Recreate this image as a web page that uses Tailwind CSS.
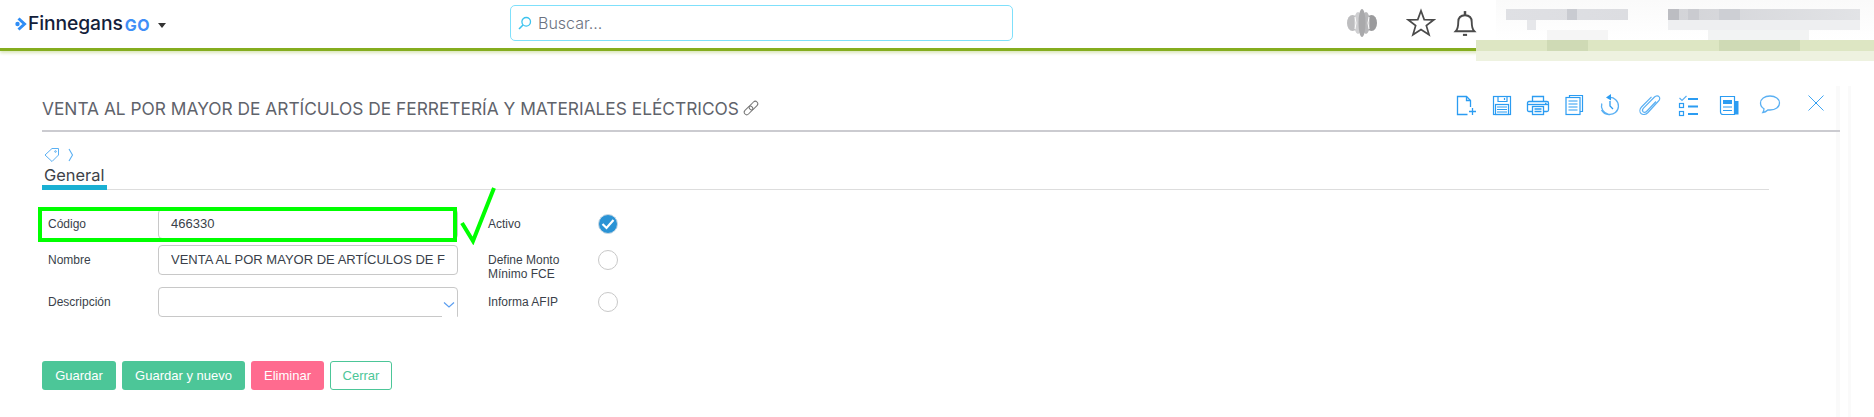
<!DOCTYPE html>
<html><head><meta charset="utf-8"><script src="https://cdn.jsdelivr.net/npm/@tailwindcss/browser@4"></script></head>
<body class="bg-white">
<div class="relative w-[1874px] h-[417px] overflow-hidden bg-white font-['Liberation_Sans',sans-serif]">
  <!-- faint scrollbar edges -->
  <div class="absolute left-[1836px] top-[86px] w-[4px] h-[331px] bg-[#fafafa]"></div>
  <div class="absolute left-[1848px] top-[86px] w-[3px] h-[331px] bg-[#fafafa]"></div>

  <!-- header -->
  <header class="relative h-[51px] border-b-[3px] border-[#85ad1f] shadow-[0_2px_3px_rgba(133,173,31,0.3)] flex items-start">
    <div class="w-[510px] h-[48px] flex items-center pl-[15px] shrink-0">
      <svg width="12" height="14" viewBox="0 0 12 14" class="mr-[1px]" fill="none"><path d="M3.500 1.500 L9.500 7 L3.500 12.500" stroke="#2f8df5" stroke-width="3"/><circle cx="2.500" cy="7" r="2.200" fill="#2f8df5"/></svg>
      <span class="font-['Inter',sans-serif] font-medium text-[19.300px] tracking-[-0.1px] text-[#13203a] leading-none">Finnegans</span>
      <span class="font-['Inter',sans-serif] font-bold text-[16px] tracking-[0.6px] text-[#3f8ff7] leading-none ml-[2px] mt-[2px]">GO</span>
      <span class="ml-[8px] mt-[2px] w-0 h-0 border-x-[4px] border-x-transparent border-t-[5px] border-t-[#333]"></span>
    </div>
    <div class="mt-[5px] w-[503px] h-[36px] border border-[#7fe0fb] rounded-[5px] flex items-center pl-[7px] shrink-0">
      <svg width="14" height="14" viewBox="0 0 14 14" fill="none" stroke="#3cc3ee" stroke-width="1.300"><circle cx="8.200" cy="5.800" r="4.300"/><path d="M5 9 L1 13" stroke-width="1.600"/></svg>
      <span class="ml-[6px] font-['Inter',sans-serif] font-light text-[16px] text-[#6b7280]">Buscar...</span>
    </div>
    <!-- ring logo, star, bell -->
    <div class="ml-[333px] h-[46px] flex items-center">
      <svg width="32" height="28" viewBox="0 0 32 28"><ellipse cx="6.500" cy="14" rx="5.500" ry="8" fill="#bdbdbf"/><ellipse cx="25.500" cy="14" rx="5.500" ry="8" fill="#9b9b9d"/><ellipse cx="12" cy="14" rx="4" ry="11" fill="#cfcfd1"/><ellipse cx="20" cy="14" rx="4" ry="11" fill="#b8b8ba"/><ellipse cx="16" cy="14" rx="3.500" ry="14" fill="#a9a9ab"/><path d="M9 8 Q11 14 9 20 M23 8 Q21 14 23 20" stroke="#fff" stroke-width="1" fill="none"/></svg>
      <svg class="ml-[28px]" width="30" height="30" viewBox="0 0 28 28" fill="none" stroke="#4a4a4a" stroke-width="1.600" stroke-linejoin="miter"><path d="M14 2.500 L17 10.800 L26 11 L19 16.500 L21.500 25 L14 20 L6.500 25 L9 16.500 L2 11 L11 10.800Z"/></svg>
      <svg class="ml-[15px]" width="28" height="29" viewBox="0 0 24 28" fill="none" stroke="#4a4a4a" stroke-width="1.800"><path d="M3 21.500 H21 C19 19.500 18.500 18 18.500 12.500 C18.500 8.500 16 6 12 6 C8 6 5.500 8.500 5.500 12.500 C5.500 18 5 19.500 3 21.500Z"/><path d="M12 2 V6" stroke-width="2.400"/><path d="M10 25 H14" stroke-width="2"/></svg>
    </div>
  </header>

  <!-- main -->
  <main class="relative pl-[42px]">
    <div class="w-[1798px] h-[81px] border-b-2 border-[#cbcbd0] flex items-end pb-[12px] justify-between">
      <div class="flex items-center h-[28px] mb-[-5px]">
        <h1 class="font-['Inter',sans-serif] font-normal text-[17.320px] text-[#5f636b] whitespace-nowrap">VENTA AL POR MAYOR DE ARTÍCULOS DE FERRETERÍA Y MATERIALES ELÉCTRICOS</h1>
        <svg class="ml-[3px] mb-[2px]" width="18" height="18" viewBox="0 0 18 18" fill="none" stroke="#777" stroke-width="1"><g transform="rotate(-45 9 9)"><rect x="0.500" y="6.500" width="10" height="5" rx="2.500"/><rect x="7.500" y="6.500" width="10" height="5" rx="2.500"/></g></svg>
      </div>
      <div class="flex items-center mr-[12px] mb-[1px]">
        <!-- new doc -->
        <svg width="24" height="24" viewBox="0 0 24 24" fill="none" stroke="#2b9cf2" stroke-width="1.300"><path d="M16.500 14 V7.500 L12.500 3.500 H3.500 V21.500 H13.500"/><path d="M12.500 3.500 V7.500 H16.500"/><path d="M15 18.500 H22 M18.500 15 V22"/></svg>
        <!-- save -->
        <svg class="ml-[12px]" width="24" height="24" viewBox="0 0 24 24" fill="none" stroke="#2b9cf2" stroke-width="1.200"><rect x="3.500" y="3.500" width="17" height="18"/><path d="M8 3.500 V8.500 H17 V3.500 M14.500 5 V7"/><rect x="5.500" y="11.500" width="13" height="10"/><path d="M7 14 H17 M7 16.500 H17 M7 19 H17"/></svg>
        <!-- print -->
        <svg class="ml-[12px]" width="24" height="24" viewBox="0 0 24 24" fill="none" stroke="#2b9cf2" stroke-width="1.300"><path d="M6.500 8.500 V3.500 H17.500 V8.500"/><path d="M6 18.500 H3 C2 18.500 1.500 18 1.500 17 V10 C1.500 9 2 8.500 3 8.500 H21 C22 8.500 22.500 9 22.500 10 V17 C22.500 18 22 18.500 21 18.500 H18"/><rect x="6.500" y="13.500" width="11" height="8"/><path d="M8.500 16 H15.500 M8.500 18.500 H15.500"/><path d="M2 11.500 H22" /><path d="M19 10.500 H20.500" /></svg>
        <!-- copy -->
        <svg class="ml-[12px]" width="24" height="24" viewBox="0 0 24 24" fill="none" stroke="#2b9cf2" stroke-width="1.200"><path d="M7.500 4 V2.500 H20.500 V18.500 H18"/><rect x="4" y="4.500" width="14" height="17"/><path d="M6.500 8 H15.500 M6.500 11 H15.500 M6.500 14 H15.500 M6.500 17 H15.500"/></svg>
        <!-- history -->
        <svg class="ml-[12px]" width="24" height="24" viewBox="0 0 24 24" fill="none" stroke="#5ab0f3" stroke-width="1.300"><path d="M11 4.500 A8.500 8.500 0 1 1 3.800 10.500 M3.500 17 A8.500 8.500 0 0 0 12 21.500" /><path d="M13 1 L8 4.500 L13 7.500Z" fill="#2b9cf2" stroke="none"/><path d="M12 8 V13 L15 16" stroke="#2b9cf2"/></svg>
        <!-- paperclip -->
        <svg class="ml-[16px]" width="24" height="24" viewBox="0 0 24 24" fill="none" stroke="#5ab0f3" stroke-width="1.200"><path d="M18 8.500 L8.500 18.500 C7.200 19.700 5.800 19.500 5 18.700 C4.200 17.800 4.300 16.400 5.500 15.200 L16.500 4 C18 2.600 20 2.500 21 3.600 C22.100 4.700 22 6.600 20.500 8 L10 19.500 C8 21.500 5 22.300 3 20.500 C1.300 18.800 1.700 16 3.500 14 L13.500 3.800"/></svg>
        <!-- checklist -->
        <svg class="ml-[16px]" width="24" height="24" viewBox="0 0 24 24" fill="none" stroke="#2b9cf2"><path d="M1.500 5 L4 7.500 L8.500 3" stroke-width="1.200" stroke="#5ab0f3"/><rect x="1.500" y="10.500" width="4" height="4" stroke-width="1.200"/><rect x="1.500" y="18.500" width="4" height="4" stroke-width="1.200"/><path d="M10 6 H20 M10 13.500 H20 M10 21 H20" stroke-width="2"/></svg>
        <!-- news -->
        <svg class="ml-[15px]" width="24" height="24" viewBox="0 0 24 24" fill="none" stroke="#2b9cf2" stroke-width="1.200"><path d="M3.500 3.500 H17.500 V21.500 H6 C4.500 21.500 3.500 20.500 3.500 19Z"/><rect x="6" y="7" width="9" height="4" fill="#2b9cf2" stroke="none"/><path d="M6 14 H15 M6 17.500 H15"/><path d="M18 8 H21.500 V21.500 H18Z" fill="#2b9cf2" stroke="none"/></svg>
        <!-- chat -->
        <svg class="ml-[17px]" width="24" height="24" viewBox="0 0 24 24" fill="none" stroke="#5ab0f3" stroke-width="1.300"><path d="M12 3 C6.500 3 2.500 5.800 2.500 10 C2.500 12.500 3.800 14.500 6 15.800 C6 17 5.500 18.500 4.800 19.500 C7 19.300 8.500 18.300 9.800 17 C10.500 17 11.200 17 12 17 C17.500 17 21.500 14 21.500 10 C21.500 5.800 17.500 3 12 3Z"/></svg>
        <!-- close -->
        <svg class="ml-[22px] mt-[-5px]" width="24" height="24" viewBox="0 0 24 24" fill="none" stroke="#2b9cf2" stroke-width="0.900"><path d="M4.500 4.500 L19.500 19.500 M19.500 4.500 L4.500 19.500"/><circle cx="12" cy="12" r="1.100" fill="#2b9cf2" stroke="none"/></svg>
      </div>
    </div>

    <!-- breadcrumb -->
    <div class="h-[18px] mt-[14px] flex items-center pl-[2px]">
      <svg width="16" height="16" viewBox="0 0 16 16" fill="none" stroke="#5ab0f3" stroke-width="1"><path d="M1 8 L8 1.500 H14.500 V8 L8 14.500 Z"/><circle cx="11.500" cy="4.500" r="0.800"/></svg>
      <svg class="ml-[8px]" width="6" height="14" viewBox="0 0 6 14" fill="none" stroke="#5ab0f3" stroke-width="1.100"><path d="M1 1 L4.500 7 L1 13"/></svg>
    </div>

    <!-- tabs -->
    <div class="w-[1727px] h-[26px] border-b border-[#dddddd]">
      <div class="w-[65px] h-[26px] border-b-[5px] border-[#1ab0d3] pl-[2px] pt-[1px] font-['Inter',sans-serif] text-[16.400px] leading-[20px] text-[#3d4248]">General</div>
    </div>

    <!-- form -->
    <div class="mt-[19px] grid grid-cols-[116px_300px_30px_110px_20px] text-[12px] text-[#3a3f4a]">
      <div class="h-[36px] pl-[6px] pt-[8px] leading-[14px]">Código</div>
      <div class="h-[30px] border border-[#c8c8c8] rounded-[4px] flex items-center pl-[12px] text-[13px]">466330</div>
      <div></div>
      <div class="pt-[8px] leading-[14px]">Activo</div>
      <div class="h-[20px] mt-[5px] w-[20px] rounded-full bg-[#2a93d5] border border-[#c8d8e4] flex items-center justify-center"><svg width="14" height="12" viewBox="0 0 14 12" fill="none" stroke="#fff" stroke-width="2.200"><path d="M1.500 6 L5.500 10 L12.500 2"/></svg></div>

      <div class="h-[42px] pl-[6px] pt-[8px] leading-[14px]">Nombre</div>
      <div class="h-[30px] border border-[#c8c8c8] rounded-[4px] flex items-center pl-[12px] text-[13px]"><div class="w-[274px] overflow-hidden whitespace-nowrap">VENTA AL POR MAYOR DE ARTÍCULOS DE FERRETERÍA Y MATERIALES ELÉCTRICOS</div></div>
      <div></div>
      <div class="pt-[8px] leading-[14px]">Define Monto<br>Mínimo FCE</div>
      <div class="h-[20px] mt-[5px] w-[20px] rounded-full border border-[#c8c8c8]"></div>

      <div class="h-[42px] pl-[6px] pt-[8px] leading-[14px]">Descripción</div>
      <div class="relative h-[30px] border border-[#c8c8c8] rounded-l-[4px] rounded-tr-[4px]">
        <svg class="absolute right-[2px] top-[13px]" width="12" height="8" viewBox="0 0 12 8" fill="none" stroke="#5b9ef0" stroke-width="1.200"><path d="M1 1.500 L6 6 L11 1.500"/></svg>
        <div class="absolute right-[0px] bottom-[-1px] w-[15px] h-[1px] bg-white"></div>
      </div>
      <div></div>
      <div class="pt-[8px] leading-[14px]">Informa AFIP</div>
      <div class="h-[20px] mt-[5px] w-[20px] rounded-full border border-[#c8c8c8]"></div>
    </div>

    <!-- buttons -->
    <div class="mt-[32px] flex gap-[6px] text-[13px] leading-[27px]">
      <button class="h-[29px] w-[74px] rounded-[3px] bg-[#4cc698] text-white text-center">Guardar</button>
      <button class="h-[29px] w-[123px] rounded-[3px] bg-[#4cc698] text-white text-center">Guardar y nuevo</button>
      <button class="h-[29px] w-[73px] rounded-[3px] bg-[#ff6b8f] text-white text-center">Eliminar</button>
      <button class="h-[29px] w-[62px] rounded-[3px] border border-[#4cc698] bg-white text-[#4cc698] text-center">Cerrar</button>
    </div>
  </main>

  <!-- annotation -->
  <div class="absolute left-[38px] top-[207px] w-[419px] h-[35px] border-4 border-[#00ff00]"></div>
  <svg class="absolute left-[455px] top-[185px]" width="45" height="60" viewBox="0 0 45 60" fill="none" stroke="#00ff00" stroke-width="4"><path d="M7 38 L18 56 L39 3"/></svg>

  <!-- blurred user block -->
  <div class="absolute left-[1496px] top-0 w-[378px] h-[40px] bg-gradient-to-b from-[#fafafa] to-white"></div>
  <div class="absolute left-[1506px] top-[9px] w-[122px] h-[11px] bg-gradient-to-r from-[#dfe0e4] to-[#dcdde1]"></div>
  <div class="absolute left-[1567px] top-[9px] w-[10px] h-[11px] bg-[#c9cbd1]"></div>
  <div class="absolute left-[1668px] top-[9px] w-[192px] h-[11px] bg-gradient-to-r from-[#d2d3d7] to-[#e2e3e6]"></div>
  <div class="absolute left-[1668px] top-[9px] w-[11px] h-[11px] bg-[#bcbdc2]"></div>
  <div class="absolute left-[1688px] top-[9px] w-[11px] h-[11px] bg-[#cacbd0]"></div>
  <div class="absolute left-[1719px] top-[9px] w-[21px] h-[11px] bg-[#cdcfd4]"></div>
  <div class="absolute left-[1668px] top-[20px] w-[192px] h-[10px] bg-[#eeeff1]"></div>
  <div class="absolute left-[1527px] top-[20px] w-[9px] h-[10px] bg-[#e6e7ea]"></div>
  <div class="absolute left-[1547px] top-[30px] w-[61px] h-[10px] bg-[#f5f5f5]"></div>
  <div class="absolute left-[1708px] top-[30px] w-[101px] h-[10px] bg-[#f2f3f3]"></div>
  <div class="absolute left-[1476px] top-[40px] w-[398px] h-[11px] bg-[#dde6c3]"></div>
  <div class="absolute left-[1547px] top-[40px] w-[41px] h-[11px] bg-[#cfdab5]"></div>
  <div class="absolute left-[1719px] top-[40px] w-[81px] h-[11px] bg-[#cfdab5]"></div>
  <div class="absolute left-[1476px] top-[51px] w-[398px] h-[10px] bg-[#eef2e0]"></div>
</div>
</body></html>
